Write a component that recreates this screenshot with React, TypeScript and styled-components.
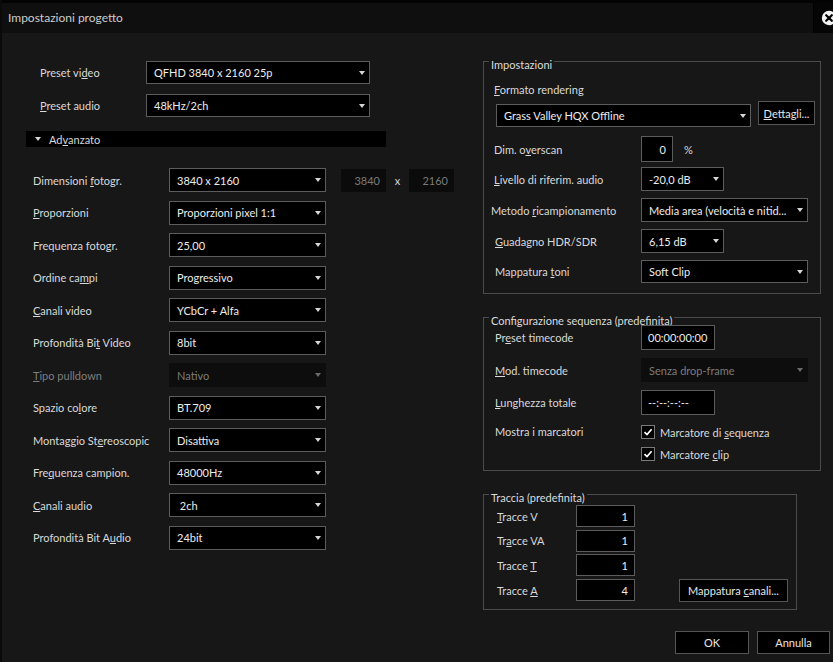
import React from "react"
import styled, { createGlobalStyle } from "styled-components"

const GlobalStyle = createGlobalStyle`
  html, body {
    margin: 0;
    padding: 0;
    background: #171717;
  }
  body {
    font-family: Lato, Roboto, "Liberation Sans", sans-serif;
    font-size: 11px;
  }
`

const Window = styled.div`
  width: 833px;
  height: 662px;
  box-sizing: border-box;
  overflow: hidden;
  background: #171717;
  border-left: 2px solid #0a0a0a;
  display: flex;
  flex-direction: column;
  color: #d9d9d9;
`

const TitleBar = styled.div`
  display: flex;
  height: 33px;
  flex-shrink: 0;
  box-sizing: border-box;
  border-top: 3px solid #030303;
`

const Title = styled.div`
  flex: 1;
  background: #0f0f0f;
  padding-left: 6px;
  line-height: 30px;
  font-size: 12px;
  color: #cdcdcd;
`

const CloseBox = styled.div`
  width: 20px;
  flex-shrink: 0;
  background: #050505;
  border-left: 1px solid #000;
  display: flex;
  align-items: center;
  padding-left: 7px;
  box-sizing: border-box;
  svg {
    flex-shrink: 0;
  }
`

const Body = styled.div`
  flex: 1;
  display: flex;
`

const LeftCol = styled.div`
  width: 481px;
  flex-shrink: 0;
  display: flex;
  flex-direction: column;
`

const PresetBlock = styled.div`
  display: flex;
  flex-direction: column;
  gap: 10px;
  padding: 28px 0 0 38px;
`

const Row = styled.div<{ $mt?: number; $pl?: number }>`
  display: flex;
  align-items: center;
  margin-top: ${({ $mt }) => $mt ?? 0}px;
  padding-left: ${({ $pl }) => $pl ?? 0}px;
`

const Label = styled.span<{ $w?: number; $dim?: boolean }>`
  width: ${({ $w }) => ($w ? `${$w}px` : "auto")};
  flex-shrink: 0;
  white-space: nowrap;
  color: ${({ $dim }) => ($dim ? "#7e7e7e" : "#d9d9d9")};
`

const U = styled.span`
  text-decoration: underline;
  text-underline-offset: 1px;
`

const Select = styled.div<{ $w: number; $h?: number; $disabled?: boolean }>`
  box-sizing: border-box;
  width: ${({ $w }) => $w}px;
  height: ${({ $h }) => $h ?? 24}px;
  flex-shrink: 0;
  display: flex;
  align-items: center;
  justify-content: space-between;
  padding: 0 4px 0 7px;
  background: ${({ $disabled }) => ($disabled ? "#0d0d0d" : "#000")};
  border: 1px solid ${({ $disabled }) => ($disabled ? "#0d0d0d" : "#5c5c5c")};
  color: ${({ $disabled }) => ($disabled ? "#7c7c7c" : "#ededed")};
  white-space: nowrap;
  overflow: hidden;
`

const Caret = styled.span<{ $disabled?: boolean }>`
  width: 0;
  height: 0;
  flex-shrink: 0;
  margin-left: 6px;
  border-left: 3.5px solid transparent;
  border-right: 3.5px solid transparent;
  border-top: 4px solid ${({ $disabled }) => ($disabled ? "#6a6a6a" : "#d6d6d6")};
`

const SectionBar = styled.div`
  margin: 14px 0 0 24px;
  width: 360px;
  height: 16px;
  box-sizing: border-box;
  background: #000;
  display: flex;
  align-items: center;
  gap: 8px;
  padding-left: 9px;
`

const SectionCaret = styled.span`
  width: 0;
  height: 0;
  border-left: 3.5px solid transparent;
  border-right: 3.5px solid transparent;
  border-top: 4px solid #d6d6d6;
`

const AdvBlock = styled.div`
  display: flex;
  flex-direction: column;
  gap: 8.5px;
  margin-top: 21px;
  padding-left: 31px;
`

const DimField = styled.div<{ $ml?: number }>`
  width: 45px;
  height: 23px;
  box-sizing: border-box;
  margin-left: ${({ $ml }) => $ml ?? 0}px;
  background: #0b0b0b;
  color: #7a7a7a;
  display: flex;
  align-items: center;
  justify-content: flex-end;
  padding-right: 6px;
`

const DimSep = styled.span`
  width: 23px;
  text-align: center;
  color: #d9d9d9;
`

const RightCol = styled.div`
  width: 350px;
  flex-shrink: 0;
  display: flex;
  flex-direction: column;
  padding-top: 17px;
  box-sizing: border-box;
`

const Group = styled.fieldset<{ $w: number; $pb: number; $mt?: number }>`
  margin: ${({ $mt }) => $mt ?? 0}px 0 0;
  padding: 0 0 ${({ $pb }) => $pb}px;
  border: 1px solid #4b4b4b;
  width: ${({ $w }) => $w}px;
  box-sizing: border-box;
  min-inline-size: 0;
  display: flex;
  flex-direction: column;
`

const Legend = styled.legend`
  margin-left: 5px;
  padding: 8px 2px 0;
  line-height: 14px;
  color: #dcdcdc;
`

const FieldLabel = styled.div<{ $mt?: number }>`
  margin-top: ${({ $mt }) => $mt ?? 0}px;
  padding-left: 10px;
  line-height: 16px;
`

const Field = styled.div<{ $w: number; $h: number; $right?: boolean }>`
  box-sizing: border-box;
  width: ${({ $w }) => $w}px;
  height: ${({ $h }) => $h}px;
  flex-shrink: 0;
  background: #000;
  border: 1px solid #5c5c5c;
  color: #ededed;
  display: flex;
  align-items: center;
  justify-content: ${({ $right }) => ($right ? "flex-end" : "flex-start")};
  padding: 0 6px;
  white-space: nowrap;
`

const Button = styled.div<{ $w: number; $h?: number; $push?: number }>`
  box-sizing: border-box;
  width: ${({ $w }) => $w}px;
  height: ${({ $h }) => $h ?? 23}px;
  flex-shrink: 0;
  ${({ $push }) => ($push !== undefined ? `margin-left: auto; margin-right: ${$push}px;` : "")}
  background: #000;
  border: 1px solid #555;
  color: #e6e6e6;
  display: flex;
  align-items: center;
  justify-content: center;
  white-space: nowrap;
`

const RenderRow = styled.div`
  display: flex;
  align-items: flex-start;
  gap: 7px;
  margin-top: 3px;
  padding-left: 12px;
`

const RenderSelect = styled.div`
  margin-top: 3px;
`

const Unit = styled.span`
  margin-left: 11px;
`

const MarkerRow = styled(Row)`
  align-items: flex-start;
`

const CheckList = styled.div`
  display: flex;
  flex-direction: column;
  gap: 8px;
`

const CheckRow = styled.div`
  display: flex;
  align-items: center;
  gap: 5px;
  height: 14px;
`

const CheckBox = styled.span`
  width: 14px;
  height: 14px;
  box-sizing: border-box;
  background: #000;
  border: 1px solid #7a7a7a;
  display: flex;
  align-items: center;
  justify-content: center;
`

const TrackRows = styled.div`
  display: flex;
  flex-direction: column;
  gap: 2.5px;
`

const Footer = styled.div`
  display: flex;
  justify-content: flex-end;
  gap: 8px;
  margin-top: 21px;
  padding-right: 3px;
`

const Drop = ({ w, h, children, disabled }: { w: number; h?: number; children: React.ReactNode; disabled?: boolean }) => (
  <Select $w={w} $h={h} $disabled={disabled}>
    <span>{children}</span>
    <Caret $disabled={disabled} />
  </Select>
)

const advRows: { label: React.ReactNode; value: string; disabled?: boolean }[] = [
  { label: <><U>P</U>roporzioni</>, value: "Proporzioni pixel 1:1" },
  { label: <>Frequenza foto<U>g</U>r.</>, value: "25,00" },
  { label: <>Ordine ca<U>m</U>pi</>, value: "Progressivo" },
  { label: <><U>C</U>anali video</>, value: "YCbCr + Alfa" },
  { label: <>Profondità Bi<U>t</U> Video</>, value: "8bit" },
  { label: <><U>T</U>ipo pulldown</>, value: "Nativo", disabled: true },
  { label: <>Spazio co<U>l</U>ore</>, value: "BT.709" },
  { label: <>Montaggio St<U>e</U>reoscopic</>, value: "Disattiva" },
  { label: <>Fre<U>q</U>uenza campion.</>, value: "48000Hz" },
  { label: <><U>C</U>anali audio</>, value: "\u00a02ch" },
  { label: <>Profondità Bit A<U>u</U>dio</>, value: "24bit" },
]

const CloseIcon = () => (
  <svg width="16" height="16" viewBox="0 0 16 16">
    <circle cx="8" cy="8" r="7.2" fill="#f2f2f2" />
    <path d="M5.2 5.2 L10.8 10.8 M10.8 5.2 L5.2 10.8" stroke="#000" strokeWidth="2.2" strokeLinecap="round" />
  </svg>
)

const Check = () => (
  <svg width="10" height="10" viewBox="0 0 10 10">
    <path d="M1.5 5.2 L4 7.6 L8.6 2.2" fill="none" stroke="#fff" strokeWidth="1.7" />
  </svg>
)

export default function App() {
  return (
    <>
      <GlobalStyle />
      <Window>
        <TitleBar>
          <Title>Impostazioni progetto</Title>
          <CloseBox>
            <CloseIcon />
          </CloseBox>
        </TitleBar>
        <Body>
          <LeftCol>
            <PresetBlock>
              <Row>
                <Label $w={106}>Preset vi<U>d</U>eo</Label>
                <Drop w={224} h={23}>QFHD 3840 x 2160 25p</Drop>
              </Row>
              <Row>
                <Label $w={106}><U>P</U>reset audio</Label>
                <Drop w={224} h={23}>48kHz/2ch</Drop>
              </Row>
            </PresetBlock>
            <SectionBar>
              <SectionCaret />
              <span>Ad<U>v</U>anzato</span>
            </SectionBar>
            <AdvBlock>
              <Row>
                <Label $w={136}>Dimensioni <U>f</U>otogr.</Label>
                <Drop w={157}>3840 x 2160</Drop>
                <DimField $ml={15}>3840</DimField>
                <DimSep>x</DimSep>
                <DimField>2160</DimField>
              </Row>
              {advRows.map((r, i) => (
                <Row key={i}>
                  <Label $w={136} $dim={r.disabled}>{r.label}</Label>
                  <Drop w={157} disabled={r.disabled}>{r.value}</Drop>
                </Row>
              ))}
            </AdvBlock>
          </LeftCol>
          <RightCol>
            <Group $w={338} $pb={10}>
              <Legend>Impostazioni</Legend>
              <FieldLabel $mt={10}><U>F</U>ormato rendering</FieldLabel>
              <RenderRow>
                <RenderSelect>
                  <Drop w={255} h={23}>Grass Valley HQX Offline</Drop>
                </RenderSelect>
                <Button $w={57} $h={24}><span><U>D</U>ettagli...</span></Button>
              </RenderRow>
              <Row $mt={9} $pl={10}>
                <Label $w={147}>Dim. o<U>v</U>erscan</Label>
                <Field $w={32} $h={26} $right>0</Field>
                <Unit>%</Unit>
              </Row>
              <Row $mt={5} $pl={10}>
                <Label $w={147}><U>L</U>ivello di riferim. audio</Label>
                <Drop w={83}>-20,0 dB</Drop>
              </Row>
              <Row $mt={7} $pl={7}>
                <Label $w={150}>Metodo <U>r</U>icampionamento</Label>
                <Drop w={167}>Media area (velocità e nitid...</Drop>
              </Row>
              <Row $mt={7} $pl={11}>
                <Label $w={146}><U>G</U>uadagno HDR/SDR</Label>
                <Drop w={83}>6,15 dB</Drop>
              </Row>
              <Row $mt={7} $pl={11}>
                <Label $w={146}>Mappatura <U>t</U>oni</Label>
                <Drop w={167} h={23}>Soft Clip</Drop>
              </Row>
            </Group>

            <Group $w={338} $pb={9} $mt={12}>
              <Legend>Configurazione sequenza (predefinita)</Legend>
              <Row $mt={-3} $pl={11}>
                <Label $w={146}>Pr<U>e</U>set timecode</Label>
                <Field $w={74} $h={25}>00:00:00:00</Field>
              </Row>
              <Row $mt={8} $pl={11}>
                <Label $w={146}><U>M</U>od. timecode</Label>
                <Drop w={167} disabled>Senza drop-frame</Drop>
              </Row>
              <Row $mt={8} $pl={11}>
                <Label $w={146}><U>L</U>unghezza totale</Label>
                <Field $w={74} $h={25}>--:--:--:--</Field>
              </Row>
              <MarkerRow $mt={10} $pl={11}>
                <Label $w={146}>Mostra i marcatori</Label>
                <CheckList>
                  <CheckRow>
                    <CheckBox><Check /></CheckBox>
                    <span>Marcatore di <U>s</U>equenza</span>
                  </CheckRow>
                  <CheckRow>
                    <CheckBox><Check /></CheckBox>
                    <span>Marcatore <U>c</U>lip</span>
                  </CheckRow>
                </CheckList>
              </MarkerRow>
            </Group>

            <Group $w={314} $pb={7} $mt={12}>
              <Legend>Traccia (predefinita)</Legend>
              <TrackRows>
                <Row $pl={13}>
                  <Label $w={79}><U>T</U>racce V</Label>
                  <Field $w={59} $h={22} $right>1</Field>
                </Row>
                <Row $pl={13}>
                  <Label $w={79}>Tr<U>a</U>cce VA</Label>
                  <Field $w={59} $h={22} $right>1</Field>
                </Row>
                <Row $pl={13}>
                  <Label $w={79}>Tracce <U>T</U></Label>
                  <Field $w={59} $h={22} $right>1</Field>
                </Row>
                <Row $pl={13}>
                  <Label $w={79}>Tracce <U>A</U></Label>
                  <Field $w={59} $h={22} $right>4</Field>
                  <Button $w={109} $push={8}>
                    <span>Mappatura <U>c</U>anali...</span>
                  </Button>
                </Row>
              </TrackRows>
            </Group>

            <Footer>
              <Button $w={74}>OK</Button>
              <Button $w={73}>Annulla</Button>
            </Footer>
          </RightCol>
        </Body>
      </Window>
    </>
  )
}
